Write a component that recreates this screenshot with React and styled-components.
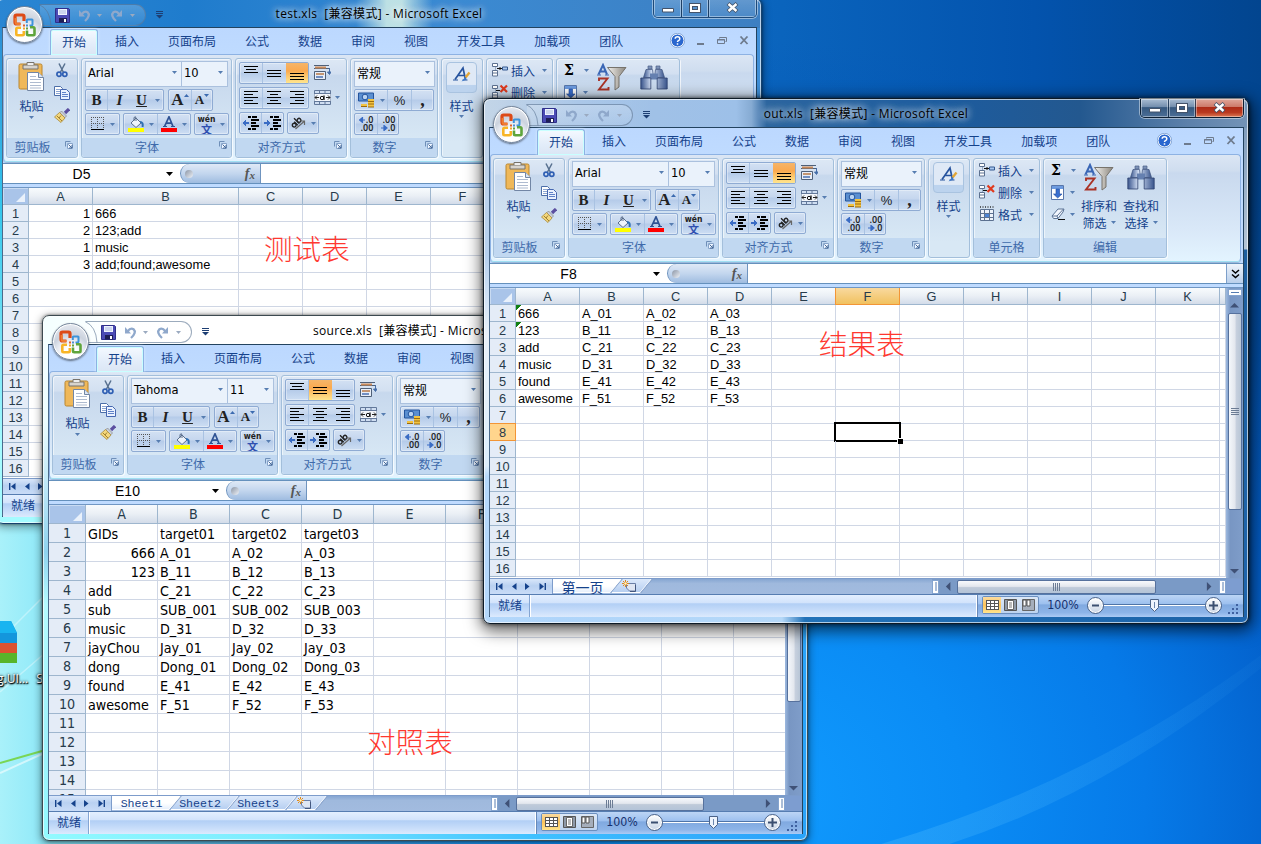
import React from 'react';
import styled, { createGlobalStyle, css } from 'styled-components';

const cjk = '"Noto Sans CJK SC", sans-serif';
const tahoma = `"DejaVu Sans Condensed", "DejaVu Sans", ${cjk}`;
const segoe = `"Open Sans", ${cjk}`;

const Global = createGlobalStyle`
  * { box-sizing: border-box; }
  body { margin: 0; font-family: ${cjk}; font-size: 12px; color: #15428b; overflow: hidden; }
  svg { display: block; flex: none; }
`;

/* ---------- desktop ---------- */
const Desktop = styled.main`
  position: relative;
  width: 1261px;
  height: 844px;
  overflow: hidden;
  background:
    linear-gradient(90deg, #a9f1fa 0, #86e6f8 60px, rgba(80, 200, 250, 0) 560px) 0 100% / 560px 430px no-repeat,
    radial-gradient(ellipse 900px 760px at 740px 800px, #119cff 0%, #0a8cf5 25%, #067ae8 45%, rgba(3, 98, 210, 0.85) 65%, rgba(2, 84, 182, 0.4) 84%, rgba(2, 80, 170, 0) 100%),
    linear-gradient(90deg, #1c8ee0 0, #0a64bd 62%, #0353ad 82%, #02458f 100%);
`;

const Beams = styled.svg`
  position: absolute;
  left: 0;
  top: 520px;
`;

const IconLabel = styled.div`
  position: absolute;
  left: -3px;
  top: 670px;
  display: flex;
  gap: 8px;
  font: 12px/18px ${segoe};
  color: #fff;
  text-shadow: 0 1px 2px #000, 0 0 3px #000, 1px 1px 1px #000;
`;

/* ---------- window frame ---------- */
const Frame = styled.section`
  position: absolute;
  left: ${p => p.$x}px;
  top: ${p => p.$y}px;
  width: 766px;
  height: 526px;
  padding: 0 5px 6px 5px;
  display: flex;
  flex-direction: column;
  border: 1px solid ${p => p.$edge || '#1b2b3a'};
  border-radius: 7px;
  background: ${p => p.$bg};
  box-shadow: inset 0 0 0 1px rgba(255, 255, 255, 0.65), ${p => p.$active
    ? '0 0 4px rgba(0,0,0,.7), 1px 4px 16px 3px rgba(0,0,0,.62)'
    : '0 0 3px rgba(0,0,0,.5), 0 2px 9px 1px rgba(0,0,0,.4)'};
`;

const TitleBar = styled.header`
  height: 28px;
  flex: none;
  display: flex;
  position: relative;
  justify-content: center;
  align-items: flex-start;
`;

const Title = styled.h1`
  margin: 5px 0 0;
  font: 400 12px/20px ${segoe};
  letter-spacing: 0.32px;
  color: #000;
  white-space: pre;
  text-shadow: 0 0 6px rgba(255,255,255,.75), 0 0 8px rgba(255,255,255,.75), 0 0 12px rgba(255,255,255,.6);
`;

const OfficeButton = styled.div`
  position: absolute;
  z-index: 3;
  left: 4px;
  top: 7px;
  width: 37px;
  height: 37px;
  border-radius: 50%;
  border: 1px solid #76869b;
  background: radial-gradient(circle at 50% 85%, #fff 0 20%, #e4e8ef 42%, #ccd3de 56%, #f1f3f8 100%);
  box-shadow: inset 0 0 0 1px #fff, 0 1px 2px rgba(0, 0, 0, 0.5);
  display: grid;
  place-items: center;
`;

const QuickAccess = styled.div`
  position: absolute;
  left: 38px;
  top: 5px;
  width: 106px;
  height: 22px;
  padding-left: 15px;
  display: flex;
  align-items: center;
  border: 1px solid rgba(90, 115, 145, 0.6);
  border-left: 0;
  border-radius: 0 11px 11px 0;
  background: linear-gradient(rgba(255,255,255,.22), rgba(255,255,255,.08));
`;

const QuickCurve = styled.svg`
  position: absolute;
  left: -1px;
  top: -1px;
`;
const Spacer = styled.span`
  width: ${p => p.$w || 0}px;
  height: ${p => p.$h || 0}px;
  flex: ${p => (p.$fill ? 1 : 'none')};
`;

const Controls = styled.div`
  position: absolute;
  right: -1px;
  top: 0;
  height: 19px;
  display: flex;
  border: 1px solid ${p => (p.$active ? '#0c1f33' : 'rgba(20,55,95,.75)')};
  border-top: 0;
  border-radius: 0 0 5px 5px;
  overflow: hidden;
  box-shadow: 0 0 0 1px rgba(255, 255, 255, 0.45);
`;

const Control = styled.span`
  width: ${p => p.$w}px;
  display: grid;
  place-items: center;
  padding-bottom: 1px;
  border-left: ${p => (p.$first ? 0 : '1px solid rgba(10,35,65,.75)')};
  box-shadow: inset 0 0 0 1px rgba(255, 255, 255, 0.4);
  background: ${p => p.$close
    ? 'linear-gradient(#e0a79a 0, #cd7a6a 42%, #ad2a16 46%, #b93a20 75%, #dd7a55 100%)'
    : p.$active
      ? 'linear-gradient(#a9bdd3 0, #7590af 42%, #35587f 48%, #4c6f97 100%)'
      : 'linear-gradient(rgba(255,255,255,.2), rgba(255,255,255,.08))'};
`;

const Client = styled.div`
  width: 755px;
  height: 490px;
  border: 1px solid #23435f;
  border-left-color: #4b6a8b;
  display: flex;
  flex-direction: column;
  background: #bfdbff;
`;

/* ---------- ribbon ---------- */
const TabStrip = styled.nav`
  height: 26px;
  flex: none;
  display: flex;
  gap: 5px;
  padding: 1px 2px 0 47px;
  background: linear-gradient(#bcd8ff, #bfdbff);
`;

const Tab = styled.span`
  padding: 0 12px;
  height: 25px;
  line-height: 24px;
  white-space: nowrap;
  border-radius: 3px 3px 0 0;
  ${p => p.$on && css`
    height: 26px;
    padding: 0 11px;
    background: linear-gradient(#f4f9ff, #e2ecf9 60%, #dbe6f4);
    border: 1px solid #8db2e3;
    border-bottom: 0;
    box-shadow: inset 0 0 0 1px #c9ffff, 0 0 3px #e0f0ff;
    position: relative;
    z-index: 1;
  `}
`;

const TabTools = styled.div`
  margin-left: auto;
  display: flex;
  align-items: center;
  gap: 11px;
  padding: 0 4px 2px 0;
`;

const RibbonBody = styled.div`
  height: 108px;
  flex: none;
  margin: 0 2px 0 0;
  padding: 3px 2px;
  display: flex;
  gap: 3px;
  border: 1px solid #8db2e3;
  border-bottom-color: #a0e0f2;
  border-radius: 4px;
  background: linear-gradient(#dbe6f4 0, #cfddef 15%, #c9d9ee 17%, #d9e8f8 70%, #e3f4ff 100%);
  box-shadow: 0 1px 0 #9cb9dc;
`;

const Group = styled.div`
  width: ${p => p.$w}px;
  height: 100px;
  flex: none;
  display: flex;
  flex-direction: column;
  border: 1px solid #a3bfdb;
  border-radius: 3px;
  box-shadow: inset 1px 1px 0 rgba(255,255,255,.55), 1px 1px 0 rgba(255,255,255,.7);
  background: linear-gradient(#dde8f5 0, #d3e0f1 15%, #c7d8ed 17%, #d8e8f5 85%);
`;

const GroupBody = styled.div`
  height: 79px;
  display: flex;
  padding: ${p => p.$pad || '3px 3px 0'};
  gap: ${p => p.$gap || 0}px;
`;

const GroupLabel = styled.div`
  flex: 1;
  background: #c1d8f1;
  color: #3e6aaa;
  line-height: 18px;
  display: flex;
  justify-content: center;
  position: relative;
  border-radius: 0 0 3px 3px;
  padding-right: ${p => (p.$launch ? 19 : 0)}px;
  svg { position: absolute; right: 4px; top: 3px; }
`;

const Stack = styled.div`
  display: flex;
  flex-direction: column;
  align-items: ${p => p.$align || 'center'};
  gap: ${p => p.$gap || 0}px;
  width: ${p => (p.$w ? p.$w + 'px' : 'auto')};
  padding-top: ${p => p.$top || 0}px;
  line-height: ${p => p.$lh || 17}px;
  white-space: nowrap;
  flex: none;
`;

const Row = styled.div`
  display: flex;
  align-items: center;
  height: ${p => p.$h || 22}px;
  gap: ${p => p.$gap || 0}px;
  flex: none;
`;

const Combo = styled.div`
  width: ${p => p.$w}px;
  height: 26px;
  margin-right: -1px;
  padding: 0 4px 3px 2px;
  display: flex;
  align-items: center;
  justify-content: space-between;
  border: 1px solid #abc1de;
  background: #eaf2fb;
  color: #000;
  font: ${p => (p.$cjk ? `12px ${cjk}` : `12.800px ${tahoma}`)};
`;

const Buttons = styled.div`
  height: 22px;
  flex: none;
  display: flex;
  border: 1px solid #8fabd3;
  border-radius: 2px;
  background: linear-gradient(#d3e1f3 0, #c5d6ee 45%, #b5cbe9 50%, #cddef3 100%);
  box-shadow: inset 0 0 0 1px rgba(255, 255, 255, 0.35);
  overflow: hidden;
`;

const Btn = styled.span`
  width: ${p => p.$w}px;
  display: flex;
  align-items: center;
  justify-content: center;
  gap: 5px;
  border-left: ${p => (p.$sep ? '1px solid #a9c2e2' : 0)};
  font: ${p => p.$font || `12px ${tahoma}`};
  text-decoration: ${p => (p.$u ? 'underline' : 'none')};
  color: #222;
  ${p => p.$hot && css`background: linear-gradient(#f5b56a 0, #fba94e 40%, #fdc267 60%, #ffe58e 100%);`}
`;

const Pinyin = styled.span`
  font: bold 8.500px/9px ${tahoma};
`;
const Hanzi = styled.span`
  font: bold 11px/10px ${cjk};
  color: #2f4fb0;
`;
const Sigma = styled.b`
  width: 13px;
  font: bold 14px "DejaVu Serif", serif;
  color: #000;
`;

const StyleTile = styled.div`
  width: 31px;
  height: 31px;
  display: grid;
  place-items: center;
  padding-bottom: 5px;
  border: 1px solid #a9c3e0;
  border-radius: 4px;
  background: linear-gradient(#dfe9f6 0, #dfe9f6 74%, #bcd3ee 76%);
`;

/* ---------- formula bar ---------- */
const FormulaBar = styled.div`
  height: 21px;
  flex: none;
  margin-top: 1px;
  display: flex;
  border: solid #6591bd;
  border-width: 1px 0;
  background: #fff;
`;

const NameBox = styled.div`
  width: 177px;
  display: flex;
  align-items: center;
  padding-right: 7px;
  font: 14px "Liberation Sans", sans-serif;
  color: #000;
  span { flex: 1; text-align: center; padding-right: 6px; }
`;

const FxZone = styled.div`
  width: 81px;
  display: flex;
  align-items: center;
  justify-content: space-between;
  padding: 0 5px 0 4px;
  border: solid #6f94bf;
  border-width: 0 1px 0 1px;
  border-radius: 10px 0 0 10px;
  background: linear-gradient(#dfe9f6, #c3d6ee 50%, #9fbce0);
  font: italic bold 14px/18px "Liberation Serif", serif;
  color: #555;
  i { width: 8px; height: 8px; border-radius: 50%; background: linear-gradient(135deg, #8b95a5, #eef2f8); }
  sub { font-size: 11px; vertical-align: -1px; line-height: 10px; }
`;

const Expand = styled.div`
  width: 17px;
  margin-left: auto;
  display: grid;
  place-items: center;
  border-left: 1px solid #7d9fca;
  background: linear-gradient(#eef4fb, #b9cfeb);
`;

/* ---------- sheet ---------- */
const Pane = styled.div`
  height: 291px;
  margin-top: 3px;
  flex: none;
  display: flex;
  border-top: 1px solid #7097c4;
`;

const Cells = styled.div`
  width: 736px;
  height: 290px;
  overflow: hidden;
  display: grid;
  align-content: start;
  grid-template-columns: ${p => p.$cols};
  grid-template-rows: ${p => p.$head}px;
  grid-auto-rows: ${p => p.$row}px;
  background: #fff;
  font: ${p => p.$font};
  color: #000;
`;

const headerBase = css`
  display: flex;
  align-items: center;
  justify-content: center;
  border: solid #9eb6ce;
  border-width: 0 1px 1px 0;
  color: #273b4b;
`;
const ColHead = styled.div`
  ${headerBase}
  background: linear-gradient(#f8fbfd 0, #eaeff5 50%, #d3dce9 100%);
  ${p => p.$on && css`
    background: linear-gradient(#f9d99f, #f1c15f);
    border-color: #f29536;
    box-shadow: -1px 0 0 #f29536;
  `}
`;
const RowHead = styled.div`
  ${headerBase}
  background: #e4ecf7;
  ${p => p.$on && css`
    background: #ffd58d;
    border-color: #f29536;
    box-shadow: 0 -1px 0 #f29536;
  `}
`;
const Corner = styled.div`
  border: solid #9eb6ce;
  border-width: 0 1px 1px 0;
  background: #a9c4e9;
  display: flex;
  align-items: flex-end;
  justify-content: flex-end;
  padding: 2px 3px;
  box-shadow: inset 1px 1px 0 #c9dbf2;
`;
const Cell = styled.div`
  position: relative;
  display: flex;
  align-items: center;
  justify-content: ${p => (p.$num ? 'flex-end' : 'flex-start')};
  padding: ${p => p.$drop}px 2px 0 2px;
  white-space: pre;
  border: solid #d0d7e5;
  border-width: 0 1px 1px 0;
  ${p => p.$flag && css`
    background: linear-gradient(135deg, #118011 0 3.6px, transparent 3.7px);
  `}
  ${p => p.$selected && css`
    &::before { content: ''; position: absolute; inset: -2px; border: 2px solid #000; }
    &::after { content: ''; position: absolute; z-index: 1; right: -4px; bottom: -4px; width: 5px; height: 5px; background: #000; box-shadow: -1px -1px 0 #fff; }
  `}
`;

const VScroll = styled.div`
  width: 17px;
  display: flex;
  flex-direction: column;
  align-items: center;
  padding: 1px 1px 4px;
  background: linear-gradient(90deg, #9db9df, #7896c3 25%, #7f9dc9);
`;
const SplitBox = styled.div`
  width: ${p => p.$w}px;
  height: ${p => p.$h}px;
  flex: none;
  display: grid;
  place-items: center;
  background: #fff;
  border: 1px solid #84a4cf;
`;
const thumbBase = css`
  border: 1px solid #56719d;
  border-radius: 2px;
  display: grid;
  place-items: center;
  flex: none;
`;
const VThumb = styled.div`
  ${thumbBase}
  width: 14px;
  height: ${p => p.$h}px;
  margin-top: 5px;
  background: linear-gradient(90deg, #f4f7fb 0, #e3e7ee 50%, #c7d0de 60%, #b8c6d6 100%);
`;
const HThumb = styled.div`
  ${thumbBase}
  width: ${p => p.$w}px;
  height: 14px;
  margin-left: 6px;
  background: linear-gradient(#f7f9fc 0, #e3e7ee 45%, #bfcad9 55%, #b4c4d8 100%);
`;

/* ---------- bottom bars ---------- */
const BottomBar = styled.div`
  height: 16px;
  flex: none;
  display: flex;
  background: linear-gradient(#86a6d2, #9fb9dd 30%, #a2bbdf);
  border-top: 1px solid #7d9ccb;
`;
const NavArrows = styled.div`
  width: 63px;
  display: flex;
  align-items: center;
  justify-content: space-around;
  padding: 0 2px;
  background: linear-gradient(#d9e7fa, #b9d1f1 45%, #c9dcf7);
  border-right: 1px solid #7d9ccb;
`;
const SheetTabs = styled.div`
  display: flex;
  overflow: hidden;
  padding-right: 13px;
`;
const SheetTab = styled.span`
  position: relative;
  z-index: 0;
  width: ${p => p.$w}px;
  height: 15px;
  margin-right: 1px;
  display: flex;
  align-items: center;
  justify-content: center;
  padding-left: ${p => p.$pl || 5}px;
  font: ${p => p.$font};
  line-height: 14px;
  color: #15428b;
  white-space: nowrap;
  &::before {
    content: '';
    position: absolute;
    z-index: -1;
    inset: 0 -7px 1px ${p => (p.$on ? '-10px' : '6px')};
    transform: skewX(-40deg);
    background: ${p => (p.$on ? 'linear-gradient(#fff 50%, #e3edfb)' : 'linear-gradient(#dce9fb, #b4cdf0)')};
    border: solid #86a0c8;
    border-width: 0 1px 0 0;
    box-shadow: inset -1px -1px 0 #fff;
  }
`;
const HScroll = styled.div`
  margin-left: auto;
  width: 294px;
  display: flex;
  align-items: center;
  background: #7a9ac6;
`;
const ScrollCorner = styled.div`width: 17px; background: #7d9dd0;`;

const StatusBar = styled.footer`
  height: 23px;
  flex: none;
  display: flex;
  border-top: 1px solid #567db1;
  background: linear-gradient(#e3efff 0, #d2e3fb 35%, #b2cff5 40%, #c9defa 75%, #dceafd 100%);
`;
const Ready = styled.div`
  width: 40px;
  padding-left: 8px;
  line-height: 20px;
  border-right: 1px solid #84a5d3;
  box-shadow: 1px 0 0 #fff;
`;
const ViewZone = styled.div`
  margin-left: auto;
  width: 266px;
  display: flex;
  align-items: center;
  padding: 0 0 2px 4px;
  border-left: 1px solid #6788b8;
  box-shadow: -1px 0 0 #fff;
  background: linear-gradient(#bcd5f5 0, #9dc0ef 40%, #80a9e0 45%, #8db4e8 80%, #abcaf5 100%);
`;
const Views = styled.div`
  display: flex;
  width: 57px;
  height: 18px;
  border: 1px solid #6b8fbf;
  border-radius: 2px;
  background: linear-gradient(#dce8f7, #bdd3ef);
`;
const View = styled.span`
  flex: 1;
  display: grid;
  place-items: center;
  background: ${p => (p.$on ? 'linear-gradient(#fbdba0, #fcc35a 50%, #ffe48c)' : 'none')};
`;
const Percent = styled.span`
  width: 48px;
  text-align: center;
  font: 12.3px ${tahoma};
  color: #15306e;
`;
const Knob = styled.span`
  width: 17px;
  height: 17px;
  flex: none;
  border: 1px solid #4b6389;
  border-radius: 50%;
  display: grid;
  place-items: center;
  background: linear-gradient(#fff, #c9d5e5);
  box-shadow: inset 0 0 0 1px #fff;
`;
const Track = styled.span`
  width: 101px;
  height: 18px;
  display: grid;
  place-items: center;
  background: linear-gradient(#4f74a8, #4f74a8) 0 8px / 100% 1px no-repeat, linear-gradient(#fff, #fff) 0 9px / 100% 1px no-repeat;
`;
const ResizeGrip = styled.div`
  align-self: flex-end;
  padding-left: 5px;
`;

const Note = styled.p`
  position: absolute;
  margin: 0;
  left: ${p => p.$x}px;
  top: ${p => p.$y}px;
  font: 300 28.6px/34px ${cjk};
  color: #ff3830;
  white-space: nowrap;
`;

/* ---------- icons ---------- */
const Svg = ({ w, h, children, ...r }) => (
  <svg width={w} height={h} viewBox={`0 0 ${w} ${h}`} fill="none" {...r}>{children}</svg>
);
const Caret = ({ c = '#567db1' }) => <Svg w={5} h={3}><path d="M0 0h5L2.5 3z" fill={c} /></Svg>;
const Tri = ({ dir, c = '#3f5176', s = 5 }) => {
  const d = { up: 'M0 6L5 1l5 5z', down: 'M0 1h10L5 6z', left: 'M6 0v10L1 5z', right: 'M1 0v10l5-5z' }[dir];
  const v = dir === 'up' || dir === 'down' ? [10, 7] : [7, 10];
  const k = s / 5;
  return <svg width={v[0] * k} height={v[1] * k} viewBox={`0 0 ${v[0]} ${v[1]}`}><path d={d} fill={c} /></svg>;
};
const Logo = () => (
  <Svg w={24} h={24}>
    <path d="M11 8V3.500Q11 2 9.500 2H3.500Q2 2 2 3.500V9.500Q2 11 3.500 11H7.500" stroke="#dd4a17" strokeWidth="3.200" />
    <path d="M2.600 5V9.500Q2.600 11 4 11H7.500" stroke="#f07c30" strokeWidth="2" />
    <path d="M13.800 10V7Q13.800 6.500 14.500 6.500H19Q19.500 6.500 19.500 7V11.500Q19.500 12.500 18.500 12.500H16.500" stroke="#3d93da" strokeWidth="2" />
    <path d="M8 14.800H4.500Q3.300 14.800 3.300 16V21Q3.300 22.200 4.500 22.200H9.500Q10.800 22.200 10.800 21V18" stroke="#f8b526" strokeWidth="2.600" />
    <path d="M14 17.500V21Q14 22.200 15.200 22.200H20.300Q21.500 22.200 21.500 21V15.500Q21.500 14.200 20.300 14.200H17" stroke="#5fa53c" strokeWidth="2.600" />
    <path d="M10 11.500h2v2h-2z" fill="#e0622a" /><path d="M13 11.500h2v2h-2z" fill="#4d8fd0" />
    <path d="M10 14.500h2v2h-2z" fill="#f0a830" /><path d="M13 14.500h2v2h-2z" fill="#64a044" />
  </Svg>
);
const Save = () => (
  <Svg w={15} h={15}>
    <path d="M.5.500h13l1 1v13H.500z" fill="#4b4bb5" stroke="#2f2f8a" />
    <path d="M3 1h9v6H3z" fill="#eef3ff" /><path d="M4 3h7M4 5h7" stroke="#aab8dd" />
    <path d="M4 10h8v4.500H4z" fill="#1e1e55" /><path d="M9 11h2v3H9z" fill="#fff" />
  </Svg>
);
const Undo = ({ flip }) => (
  <Svg w={13} h={13}>
    <g transform={flip ? 'translate(13 0) scale(-1 1)' : undefined} stroke="#8fa8cb">
      <path d="M3.500 5.500Q6.500 1.500 9.500 3.200Q13 6.500 7 12" strokeWidth="2.300" />
      <path d="M1 1v6.500h6z" fill="#8fa8cb" strokeWidth="0" />
    </g>
  </Svg>
);
const More = () => <Svg w={7} h={8}><path d="M0 0.500h7M0 2.500h7" stroke="#1d3e73" /><path d="M0 4h7L3.500 7.500z" fill="#1d3e73" /></Svg>;
const Paste = () => (
  <Svg w={27} h={31}>
    <rect x="1" y="3" width="23" height="25" rx="1.500" fill="#efb85a" stroke="#b98631" />
    <path d="M5 4h15v4H5z" fill="#d8d4cd" stroke="#77736c" /><path d="M9 4V1.500h7V4" fill="#eee" stroke="#77736c" />
    <path d="M9.500 11.500h11l5 5v13h-16z" fill="#fff" stroke="#7286a5" /><path d="M20.500 11.500v5h5" stroke="#7286a5" fill="#dbe5f2" />
    <path d="M12 15.500h6M12 18.500h11M12 21.500h11M12 24.500h11M12 27h11" stroke="#aebbd0" />
  </Svg>
);
const Cut = () => (
  <Svg w={14} h={15}><path d="M4 0.500l4.500 9M10 0.500L5.500 9" stroke="#57708f" strokeWidth="1.500" />
    <circle cx="4" cy="11.200" r="2.100" stroke="#2f5fb3" strokeWidth="1.700" /><circle cx="9.800" cy="11.200" r="2.100" stroke="#2f5fb3" strokeWidth="1.700" /></Svg>
);
const Copy = () => (
  <Svg w={16} h={14}><path d="M.5.500h6l2 2v7h-8z" fill="#fff" stroke="#4c6ea8" /><path d="M2 3.500h4M2 5.500h5M2 7.500h5" stroke="#8ba5d2" />
    <path d="M6.500 3.500h6l3 3v7h-9z" fill="#e9f1ff" stroke="#4667b0" /><path d="M8 6.500h4M8 8.500h6M8 10.500h6" stroke="#5f82c8" /></Svg>
);
const Brush = () => (
  <Svg w={16} h={15}><path d="M15 1l-4 4" stroke="#5b4fa0" strokeWidth="3.200" /><path d="M7.500 3l5 5-2 2-5-5z" fill="#c9ced8" stroke="#777" strokeWidth=".6" />
    <path d="M5.500 4.500l5.500 5.500-4 4.500L.5 9z" fill="#f3d77c" stroke="#a8893a" strokeWidth=".8" /><path d="M3 8l5 5M5 10l2-2.500" stroke="#a08030" /></Svg>
);
const Lines = ({ rows, y0 = 0, w = 15, h = 14, gap = 3 }) => (
  <Svg w={w} h={h} shapeRendering="crispEdges">
    {rows.map(([a, b], i) => <path key={i} d={`M${a} ${y0 + i * gap + 0.5}H${b}`} stroke="#000" />)}
  </Svg>
);
const Borders = () => (
  <Svg w={14} h={14} shapeRendering="crispEdges"><path d="M0 .5h13M0 6.500h13M.5 0v12M6.500 0v12M12.500 0v12" stroke="#555" strokeDasharray="1 1" /><path d="M0 12.500h13" stroke="#000" /></Svg>
);
const Bucket = () => (
  <Svg w={16} h={16}><path d="M3 7l5-5 5 5-5 4.500z" fill="#eef4fb" stroke="#5b6f8c" /><path d="M6 5V1.500q2-2 2 1V5" stroke="#5b6f8c" />
    <path d="M12 6q3.500 0 2.500 5" stroke="#2f6fb3" strokeWidth="2" /><path d="M0 12h16v4H0z" fill="#ff0" /></Svg>
);
const FontColor = () => (
  <Svg w={16} h={16}><path d="M3.500 10.500L8 0.800l4 9.700M5 7.200h6" stroke="#2f5394" strokeWidth="1.700" /><path d="M2 10.500h4M10 10.500h4" stroke="#2f5394" /><path d="M0 12h16v4H0z" fill="red" /></Svg>
);
const Indent = ({ right }) => (
  <Svg w={17} h={15} shapeRendering="crispEdges"><path d="M6 1h3M10 1h5M9 4h8M9 7h5M9 10h8M6 13h3M10 13h4" stroke="#000" strokeWidth="2" />
    <path d={right ? 'M0 5.500h3V3l4 4-4 4V8.500H0z' : 'M8 5.500H5V3L1 7l4 4V8.500h3z'} fill="#3a6cc4" transform="translate(0 .8) scale(.88)" /></Svg>
);
const Orient = () => (
  <Svg w={16} h={14}><g transform="rotate(-45 6 6)" stroke="#222" strokeWidth="1.400"><circle cx="2.500" cy="7" r="1.900" /><path d="M5 4.500v5M7.200 2v7.500" /><circle cx="9.300" cy="7" r="1.900" /></g><path d="M5.500 13L14 5.500M10.500 5H14.500V9" stroke="#666" strokeWidth="1.200" /></Svg>
);
const Wrap = () => (
  <Svg w={17} h={17}><path d="M0 1.500h15M0 4.500h15" stroke="#4f6078" /><path d="M1 2.500h11v2H1z" fill="#c98a5a" /><path d="M15.500 4v6M13.500 8l2 2.500 1.500-2.500z" stroke="#466ea8" fill="#466ea8" />
    <path d="M.500 7.500h11v8H.500z" fill="#e8eef8" stroke="#4f6078" /><path d="M2 10h8" stroke="#b87846" strokeWidth="1.500" /><path d="M2 13h7" stroke="#4a6fb0" strokeWidth="1.500" /></Svg>
);
const Merge = () => (
  <Svg w={17} h={15}><path d="M.5.500h16v14H.500zM5.500 0v3M11 0v3M5.500 12v3M11 12v3" stroke="#62789a" fill="#cfdef2" /><path d="M0 3.500h17v8H0z" fill="#f3f6fb" stroke="#62789a" />
    <path d="M1 7.500h4M12 7.500h4M3 5.500l-2 2 2 2M14 5.500l2 2-2 2" stroke="#222" /><circle cx="8" cy="8" r="1.700" stroke="#111" /><path d="M10 5.500v4.500" stroke="#111" strokeWidth="1.300" /></Svg>
);
const Money = () => (
  <Svg w={17} h={16}><path d="M.5 1h15v8h-15z" fill="#5b8fd0" stroke="#24549c" /><circle cx="7" cy="5" r="2.800" fill="#b9d3f2" stroke="#24549c" />
    <path d="M10 7h6v8h-6z" fill="#f3c33f" /><path d="M10 9.500h6M10 12h6M10 15h6M3 14.500h6" stroke="#9a6a10" /><path d="M3 13h6" stroke="#f3c33f" strokeWidth="2" /></Svg>
);
const Decimals = styled.span`
  display: flex;
  flex-direction: column;
  align-items: flex-end;
  font: 9px/8px "DejaVu Sans Condensed", sans-serif;
  color: #111;
  -webkit-text-stroke: 0.2px #111;
  span { display: flex; align-items: center; }
`;
const BlueArrow = ({ right }) => <Svg w={7} h={6}><path d={right ? 'M0 3h3M3 .5v5L6 3z' : 'M6 3H3M3.500 .5v5L.5 3z'} stroke="#3a6cc4" fill="#3a6cc4" strokeWidth="1.200" /></Svg>;
const Launch = () => <Svg w={8} h={8}><path d="M.5 5.500v-5h5" stroke="#6f8fb8" /><path d="M2.500 2.500h5v5h-5z" fill="#eef5ff" stroke="#86a3c9" /><path d="M3.500 3.500L7 7M7 4v3H4" stroke="#466a9a" /></Svg>;
const Grow = ({ down }) => <Svg w={5} h={14}><path d={down ? 'M0 1h5L2.500 4z' : 'M0 4h5L2.500 1z'} fill="#3c6bb0" /></Svg>;
const StyleA = () => (
  <Svg w={18} h={18}><path d="M2 13.500L10 2l2.500 11.500M4.500 9.500h7" stroke="#27549e" strokeWidth="1.700" /><path d="M0 14h5M9.500 14h5" stroke="#27549e" />
    <path d="M16.500 6.500l-4 5" stroke="#e2a638" strokeWidth="2.400" /><path d="M12.500 11l-4 4.500 5-2z" fill="#3a78cc" /></Svg>
);
const CellOp = ({ kind }) => (
  <Svg w={16} h={16}>
    {kind === 'fmt' ? <><path d="M1.500 3.500h13v11h-13zM1.500 7.500h13M1.500 11.500h13M5.500 3v12M10.500 3v12" stroke="#5c7190" fill="#eef3fa" /><path d="M6 8h4v3H6z" fill="#4d84d4" /><path d="M1 1h14" stroke="#333" strokeDasharray="1 1.500" strokeWidth="1.500" /></>
      : <><path d="M.5 1.500h5v3h-5zM.5 8.500h5v5.500h-5zM.5 11h5" stroke="#5c7190" fill="#fff" /><path d="M3.500 4.500v4" stroke="#5c7190" strokeDasharray="1 1" />
        {kind === 'ins' ? <><path d="M5 6.500h5M8 5v3" stroke="#111" /><path d="M10.500 5h5v3h-5z" fill="#a8c8f0" stroke="#34598f" /></>
          : <><path d="M4 6.500h4" stroke="#111" /><path d="M8.500 1.500l6.500 6.500M15 1.500L8.500 8" stroke="#e03a1e" strokeWidth="2.200" /></>}</>}
  </Svg>
);
const FillDown = () => <Svg w={14} h={15}><path d="M.5.500h12v14H.500z" fill="#fff" stroke="#5877ab" /><path d="M1 1h11v3H1z" fill="#6d9be0" /><path d="M5 4h3.500v5H11L6.700 13 2.500 9H5z" fill="#3a6fd0" stroke="#1f4c9c" strokeWidth=".6" /></Svg>;
const Eraser = () => <Svg w={15} h={12}><path d="M1 8l6-7h6l-1 3-5 6.500H2.500z" fill="#f2f6fd" stroke="#5d7596" /><path d="M1 8h5l6.500-7M6 8l1 2.500" stroke="#5d7596" /><path d="M7 11.500h7" stroke="#111" /></Svg>;
const Sort = () => (
  <Svg w={30} h={29}><path d="M1.500 11.500L6 2l4 9.500M3.200 8.500h6" stroke="#3a66b5" strokeWidth="2" /><path d="M0 12h4M8 12h4" stroke="#3a66b5" />
    <path d="M2 18v-2.500h8.500L2 26.500h9.500V24" stroke="#a93226" strokeWidth="1.900" />
    <path d="M10.500 4.500h18.500L22 13.500V24l-4 3V13.500z" fill="url(#fun)" stroke="#77736c" />
    <defs><linearGradient id="fun"><stop stopColor="#f2f0ec" /><stop offset="1" stopColor="#8b867e" /></linearGradient></defs></Svg>
);
const Find = () => (
  <Svg w={28} h={27}><defs><linearGradient id="bin"><stop stopColor="#39558d" /><stop offset=".4" stopColor="#d6e2f6" /><stop offset="1" stopColor="#39558d" /></linearGradient></defs>
    <path d="M8 2h4v3H8zM16 2h4v3h-4z" fill="#7d93b8" stroke="#4a5f88" strokeWidth=".7" />
    <path d="M6 5.500h6.500l1 8H3.500zM15.500 5.500H22l2.500 8h-10z" fill="url(#bin)" stroke="#3d527c" strokeWidth=".7" />
    <path d="M10 9.500h8v6h-8z" fill="#6580b0" /><path d="M.8 14h10v11H.8zM17.200 14h10v11h-10z" fill="url(#bin)" stroke="#2f4370" strokeWidth=".8" /></Svg>
);
const Help = () => <Svg w={15} h={15}><circle cx="7.500" cy="7.500" r="6.500" fill="#2a67cf" stroke="#fff" /><circle cx="7.500" cy="7.500" r="7.200" stroke="#5f86bd" strokeWidth=".6" /><path d="M5.200 5.800q0-2 2.300-2T9.800 5.800q0 1.200-1.300 1.800-1 .5-1 1.400M7.500 10.200v1.500" stroke="#fff" strokeWidth="1.500" /></Svg>;
const NewSheet = () => <Svg w={16} h={13}><path d="M4.500 3.500h9v7.500h-6l-3-3z" fill="#dfe6f3" stroke="#6b7fa6" /><path d="M8 11.500h5.500V5" stroke="#44587f" /><path d="M3.500 0v7M0 3.500h7M1 1l5 5M6 1L1 6" stroke="#e08a1e" /><circle cx="3.500" cy="3.500" r="1.200" fill="#fff6c0" /></Svg>;
const Grip = ({ v }) => <Svg w={8} h={8} shapeRendering="crispEdges">{[0, 2, 4, 6].map(i => <path key={i} d={v ? `M0 ${i + 0.5}h8` : `M${i + 0.5} 0v8`} stroke="#6c7c94" />)}</Svg>;

/* ---------- ribbon groups ---------- */
function Ribbon({ font, size, valign }) {
  const serif = s => `bold ${s}px "Liberation Serif", serif`;
  return (
    <RibbonBody>
      <Group $w={72}>
        <GroupBody $pad="2px 5px 0 11px">
          <Stack $w={27}><Paste /><Stack $top={5} $gap={2}>粘贴<Caret /></Stack></Stack>
          <Stack $w={34} $top={2} $gap={8}><Cut /><Copy /><Brush /></Stack>
        </GroupBody>
        <GroupLabel $launch>剪贴板<Launch /></GroupLabel>
      </Group>

      <Group $w={151}>
        <GroupBody $pad="2px 3px 0"><Stack $align="stretch" $gap={2}>
          <Row $h={26}><Combo $w={97}>{font}<Caret /></Combo><Combo $w={47}>{size}<Caret /></Combo></Row>
          <Row $gap={4}>
            <Buttons><Btn $w={21} $font={serif(15)}>B</Btn><Btn $w={24} $sep $font={`italic ${serif(15)}`}>I</Btn><Btn $w={21} $u $font={serif(15)}>U</Btn><Btn $w={11}><Caret /></Btn></Buttons>
            <Buttons><Btn $w={22} $font={serif(17)}><Row $gap={0}>A<Grow /></Row></Btn><Btn $w={21} $sep $font={serif(13)}><Row $gap={0}>A<Grow down /></Row></Btn></Buttons>
          </Row>
          <Row $gap={3}>
            <Buttons><Btn $w={33}><Borders /><Caret /></Btn></Buttons>
            <Buttons><Btn $w={33}><Bucket /><Caret /></Btn><Btn $w={33} $sep><FontColor /><Caret /></Btn></Buttons>
            <Buttons><Btn $w={33}><Stack $lh={10}><Pinyin>wén</Pinyin><Hanzi>文</Hanzi></Stack><Caret /></Btn></Buttons>
          </Row>
        </Stack></GroupBody>
        <GroupLabel $launch>字体<Launch /></GroupLabel>
      </Group>

      <Group $w={112}>
        <GroupBody $pad="3px 3px 0" $gap={5}>
          <Stack $align="flex-start" $gap={3} $w={70}>
            <Buttons>
              <Btn $w={22}><Lines rows={[[0, 14], [2, 12], [0, 14]]} y0={0} /></Btn>
              <Btn $w={24} $sep $hot={valign === 1}><Lines rows={[[0, 14], [0, 14], [0, 14]]} y0={4} /></Btn>
              <Btn $w={22} $hot={valign === 2}><Lines rows={[[0, 14], [0, 14], [0, 14]]} y0={7} /></Btn>
            </Buttons>
            <Buttons>
              <Btn $w={22}><Lines rows={[[0, 14], [0, 9], [0, 14], [0, 9], [0, 14]]} /></Btn>
              <Btn $w={24} $sep><Lines rows={[[0, 14], [3, 11], [0, 14], [3, 11], [0, 14]]} /></Btn>
              <Btn $w={22}><Lines rows={[[0, 14], [5, 14], [0, 14], [5, 14], [0, 14]]} /></Btn>
            </Buttons>
            <Row $gap={3}>
              <Buttons><Btn $w={21}><Indent /></Btn><Btn $w={22} $sep><Indent right /></Btn></Buttons>
              <Buttons><Btn $w={30}><Orient /><Caret /></Btn></Buttons>
            </Row>
          </Stack>
          <Stack $align="flex-start" $gap={9} $top={2}><Wrap /><Row $gap={4} $h={15}><Merge /><Caret /></Row></Stack>
        </GroupBody>
        <GroupLabel $launch>对齐方式<Launch /></GroupLabel>
      </Group>

      <Group $w={88}>
        <GroupBody $pad="2px 3px 0"><Stack $align="flex-start" $gap={2}>
          <Combo $w={81} $cjk>常规<Caret /></Combo>
          <Buttons><Btn $w={32}><Money /><Caret /></Btn><Btn $w={24} $sep $font={'13px "Liberation Sans", sans-serif'}>%</Btn><Btn $w={22} $sep $font={serif(18)}><Row $h={26}>,</Row></Btn></Buttons>
          <Buttons>
            <Btn $w={22}><Decimals><span><BlueArrow />.0</span><span>.00</span></Decimals></Btn>
            <Btn $w={21} $sep><Decimals><span>.00</span><span><BlueArrow right />.0</span></Decimals></Btn>
          </Buttons>
        </Stack></GroupBody>
        <GroupLabel $launch>数字<Launch /></GroupLabel>
      </Group>

      <Group $w={42}>
        <GroupBody $pad="3px 4px 0"><Stack><StyleTile><StyleA /></StyleTile><Stack $top={4} $gap={1}>样式<Caret /></Stack></Stack></GroupBody>
      </Group>

      <Group $w={67}>
        <GroupBody $pad="0 5px"><Stack $align="flex-start">
          {[['ins', '插入'], ['del', '删除'], ['fmt', '格式']].map(([k, t]) => (
            <Row key={k} $gap={3}><CellOp kind={k} />{t}<Spacer $w={1} /><Caret /></Row>
          ))}
        </Stack></GroupBody>
        <GroupLabel>单元格</GroupLabel>
      </Group>

      <Group $w={124}>
        <GroupBody $pad="0 5px 0 7px">
          <Stack $align="flex-start" $w={27}>
            <Row $gap={7}><Sigma>Σ</Sigma><Caret /></Row>
            <Row $gap={5}><FillDown /><Caret /></Row>
            <Row $gap={4}><Eraser /><Caret /></Row>
          </Stack>
          <Stack $w={42} $top={4}><Sort /><Stack $top={5}><span>排序和</span><Row $h={17} $gap={4}>筛选<Caret /></Row></Stack></Stack>
          <Stack $w={42} $top={5}><Find /><Stack $top={6}><span>查找和</span><Row $h={17} $gap={4}>选择<Caret /></Row></Stack></Stack>
        </GroupBody>
        <GroupLabel>编辑</GroupLabel>
      </Group>
    </RibbonBody>
  );
}

const TABS = ['开始', '插入', '页面布局', '公式', '数据', '审阅', '视图', '开发工具', '加载项', '团队'];

function ExcelWindow({ file, x, y, bg, edge, active, font, size, valign, cell, grid, sheets, vThumb, hThumb, children }) {
  const letters = 'ABCDEFGHIJKLM'.split('').slice(0, grid.widths.length);
  const rows = Array.from({ length: grid.rows }, (_, i) => i);
  return (
    <Frame $x={x} $y={y} $bg={bg} $edge={edge} $active={active}>
      <TitleBar>
        <OfficeButton><Logo /></OfficeButton>
        <QuickAccess>
          <QuickCurve width="14" height="22" viewBox="0 0 14 22"><path d="M0 .5Q11 5 12 21.500" stroke="rgba(90,115,145,.6)" fill="none" /></QuickCurve>
          <Save /><Spacer $w={8} /><Undo /><Spacer $w={6} /><Caret c="#9aaac0" /><Spacer $w={8} /><Undo flip /><Spacer $w={7} /><Caret c="#9aaac0" />
          <Spacer $w={21} /><More />
        </QuickAccess>
        <Title>{file}{'  '}[兼容模式]{' '}-{' '}Microsoft Excel</Title>
        <Controls $active={active}>
          <Control $w={27} $first $active={active}><Svg w={12} h={10}><path d="M.5 5.500h11v3.500H.500z" fill="#fff" stroke="#43536a" /></Svg></Control>
          <Control $w={27} $active={active}><Svg w={12} h={10}><path d="M2 2h8v6H2z" stroke="#43536a" strokeWidth="4" /><path d="M2 2h8v6H2z" stroke="#fff" strokeWidth="2" /></Svg></Control>
          <Control $w={48} $close={active}><Svg w={13} h={11}><path d="M2 1.500l9 8M11 1.500l-9 8" stroke="#43536a" strokeWidth="4" /><path d="M2.500 2l8 7M10.500 2l-8 7" stroke="#fff" strokeWidth="2.400" /></Svg></Control>
        </Controls>
      </TitleBar>
      <Client>
        <TabStrip>
          {TABS.map((t, i) => <Tab key={t} $on={i === 0}>{t}</Tab>)}
          <TabTools>
            <Help />
            <Svg w={9} h={8}><path d="M1 7h7" stroke="#6e7b8d" strokeWidth="2" /></Svg>
            <Svg w={12} h={9}><path d="M3.500 2.500v-1h7v4h-1" stroke="#6e7b8d" /><path d="M1.500 3.500h7v4h-7z" stroke="#6e7b8d" /><path d="M1 4h8" stroke="#6e7b8d" /></Svg>
            <Svg w={11} h={9}><path d="M1.500.500l7 7.500M8.500.500L1.500 8" stroke="#6e7b8d" strokeWidth="1.800" /></Svg>
          </TabTools>
        </TabStrip>
        <Ribbon font={font} size={size} valign={valign} />
        <FormulaBar>
          <NameBox><span>{cell}</span><svg width="7" height="4" viewBox="0 0 7 4"><path d="M0 0h7L3.500 4z" fill="#000" /></svg></NameBox>
          <FxZone><i /><span>f<sub>x</sub></span></FxZone>
          <Expand><Svg w={9} h={10}><path d="M1 1l3.500 3L8 1M1 5.500l3.500 3L8 5.500" stroke="#000" strokeWidth="1.500" /></Svg></Expand>
        </FormulaBar>
        <Pane>
          <Cells $cols={[grid.rowHead, ...grid.widths].map(v => v + 'px').join(' ')} $head={grid.head} $row={grid.row} $font={grid.font}>
            <Corner><Svg w={9} h={9}><path d="M9 0v9H0z" fill="#e9f1fb" /></Svg></Corner>
            {letters.map((l, c) => <ColHead key={l} $on={grid.selected && grid.selected[0] === l}>{grid.widths[c] > 20 ? l : null}</ColHead>)}
            {rows.map(r => (
              <React.Fragment key={r}>
                <RowHead $on={grid.selected && grid.selected[1] === r + 1}>{r + 1}</RowHead>
                {letters.map((l, c) => {
                  const v = grid.data[r]?.[c];
                  return (
                    <Cell key={l} $num={typeof v === 'number'} $drop={grid.drop || 0} $flag={grid.flags && c === 0 && r < 2}
                      $selected={grid.selected && grid.selected[0] === l && grid.selected[1] === r + 1}>{v}</Cell>
                  );
                })}
              </React.Fragment>
            ))}
          </Cells>
          <VScroll>
            <SplitBox $w={14} $h={7}><Svg w={8} h={1}><path d="M0 .5h8" stroke="#567db1" /></Svg></SplitBox>
            <Spacer $h={6} />
            <Tri dir="up" s={4.5} />
            <VThumb $h={vThumb}><Grip v /></VThumb>
            <Spacer $fill />
            <Tri dir="down" s={4.5} />
          </VScroll>
        </Pane>
        <BottomBar>
          <NavArrows>
            <Svg w={7} h={7}><path d="M.7 0v7" stroke="#15428b" strokeWidth="1.400" /><path d="M6.500 0v7L2 3.500z" fill="#15428b" /></Svg>
            <Svg w={5} h={7}><path d="M4.500 0v7L0 3.500z" fill="#15428b" /></Svg>
            <Svg w={5} h={7}><path d="M0 0v7l4.500-3.500z" fill="#15428b" /></Svg>
            <Svg w={7} h={7}><path d="M6.300 0v7" stroke="#15428b" strokeWidth="1.400" /><path d="M.5 0v7L5 3.500z" fill="#15428b" /></Svg>
          </NavArrows>
          <SheetTabs>
            {sheets.names.map((s, i) => <SheetTab key={s} $w={57} $on={i === 0} $font={sheets.font} $pl={i ? 3 : 2}>{s}</SheetTab>)}
            <SheetTab $w={29} $pl={8}><NewSheet /></SheetTab>
          </SheetTabs>
          <HScroll>
            <SplitBox $w={7} $h={14}><Svg w={2} h={9}><path d="M1 0v9" stroke="#567db1" /></Svg></SplitBox>
            <Spacer $w={6} /><Tri dir="left" s={4.5} />
            <HThumb $w={hThumb}><Grip /></HThumb>
            <Spacer $fill />
            <Tri dir="right" s={4.5} /><Spacer $w={7} />
            <SplitBox $w={7} $h={14}><Svg w={2} h={9}><path d="M1 0v9" stroke="#567db1" /></Svg></SplitBox>
          </HScroll>
          <ScrollCorner />
        </BottomBar>
        <StatusBar>
          <Ready>就绪</Ready>
          <ViewZone>
            <Views>
              <View $on><Svg w={13} h={10} shapeRendering="crispEdges"><path d="M.5.500h12v9H.500zM.5 3.500h12M.5 6.500h12M4.500.500v9M8.500.500v9" stroke="#555" fill="#fff" /></Svg></View>
              <View><Svg w={13} h={12}><path d="M.5.500h12v11H.500z" fill="#8e99a8" stroke="#555" /><path d="M3.500 1.500h6v9h-6z" fill="#fff" stroke="#666" /><path d="M5 4h3M5 6h3M5 8h3" stroke="#777" /></Svg></View>
              <View><Svg w={13} h={12}><path d="M.5.500h12v11H.500z" fill="#a5aebb" stroke="#666" /><path d="M1 1h3v6H1zM5 1h3v6H5z" fill="#fff" stroke="#555" /></Svg></View>
            </Views>
            <Percent>100%</Percent>
            <Knob><Svg w={9} h={9}><path d="M1 4.500h7" stroke="#3b4f70" strokeWidth="2" /></Svg></Knob>
            <Track><Svg w={9} h={13}><path d="M.5.500h8v8l-4 4-4-4z" fill="#eef4fd" stroke="#4b6389" /><path d="M4.500 3v6" stroke="#6b86ae" /></Svg></Track>
            <Knob><Svg w={9} h={9}><path d="M0 4.500h9M4.500 0v9" stroke="#3b4f70" strokeWidth="2" /></Svg></Knob>
            <ResizeGrip><Svg w={12} h={12}>{[[9, 1], [9, 5], [5, 5], [9, 9], [5, 9], [1, 9]].map(([a, b]) => <rect key={`${a}-${b}`} x={a} y={b} width="2" height="2" fill="#3f61a0" />)}</Svg></ResizeGrip>
          </ViewZone>
        </StatusBar>
      </Client>
      {children}
    </Frame>
  );
}

const arial = '12.8px "Liberation Sans", Arial, sans-serif';
const song = `11.6px "Liberation Mono", ${cjk}`;

export default function App() {
  return (
    <>
      <Global />
      <Desktop>
        <Beams width="1261" height="324" viewBox="0 520 1261 324" fill="none">
          <defs>
            <linearGradient id="sweep" x1="0" y1="0" x2="1" y2="0">
              <stop stopColor="#5cc4ff" stopOpacity=".3" /><stop offset="1" stopColor="#5cc4ff" stopOpacity=".04" />
            </linearGradient>
          </defs>
          <path d="M860 850Q1080 790 1261 655L1261 668Q1100 800 930 850z" fill="url(#sweep)" />
          <path d="M0 640L60 580M0 692L60 640" stroke="rgba(255,255,255,.35)" strokeWidth="1.500" />
          <path d="M0 763L42 751" stroke="#79d655" strokeWidth="2" /><path d="M0 773L42 754" stroke="rgba(255,255,255,.55)" strokeWidth="2" />
          <path d="M0 621h11l6 12v10H0z" fill="#1496dc" /><path d="M0 621h11l6 12H0z" fill="#19b4f0" />
          <path d="M0 643h17v10H0z" fill="#dc5230" /><path d="M0 653h17v10H0z" fill="#58b52a" />
        </Beams>
        <IconLabel><span>g.UI...</span><span>S</span></IconLabel>

        <ExcelWindow
          file="test.xls" x={-4} y={-2} edge="#16426e"
          bg="linear-gradient(90deg, transparent 47%, rgba(235,255,235,.75) 51%, rgba(235,255,235,.75) 53%, transparent 57%) 0 0 / 100% 28px no-repeat, linear-gradient(90deg, #2a86d3 0, #1f7ccd 25%, #3b8ad2 60%, #3d7fc2 100%) 0 0 / 100% 29px no-repeat, linear-gradient(#3f8fd8, #3f8fd8) 100% 0 / 8px 100% no-repeat, linear-gradient(#2a86d3 0, #35c6ec 40%, #a5fbff 85%)"
          font="Arial" size="10" valign={2} cell="D5" vThumb={197} hThumb={199}
          sheets={{ names: ['Sheet1'], font: song }}
          grid={{
            rowHead: 26, head: 17, row: 17, rows: 16, font: arial, widths: [64, 146, 64, 64, 64, 64, 64, 64, 64, 64],
            data: [[1, '666'], [2, '123;add'], [1, 'music'], [3, 'add;found;awesome']],
          }}
        >
          <Note $x={267} $y={232}>测试表</Note>
        </ExcelWindow>

        <ExcelWindow
          file="source.xls" x={42} y={315} edge="#3c4a50"
          bg="linear-gradient(90deg, #f4ffff 0, #fff 12%, #fff 100%) 0 0 / 100% 29px no-repeat, linear-gradient(#2aa4fa, #2aa4fa) 100% 0 / 8px 100% no-repeat, linear-gradient(90deg, #92faff 0, #7cecff 30%, #3fc0ff 65%, #2aa0fa 100%) 0 100% / 100% 7px no-repeat, linear-gradient(#f6ffff 0, #ecfdff 20%, #8fd2ee 45%, #b5fbff 55%, #a0f2fb 80%, #92faff 100%)"
          font="Tahoma" size="11" valign={1} cell="E10" vThumb={172} hThumb={188}
          sheets={{ names: ['Sheet1', 'Sheet2', 'Sheet3'], font: song }}
          grid={{
            rowHead: 37, head: 19, row: 19, rows: 15, drop: 1, font: `14.2px ${tahoma}`, widths: Array(10).fill(72),
            data: [
              ['GIDs', 'target01', 'target02', 'target03'],
              [666, 'A_01', 'A_02', 'A_03'],
              [123, 'B_11', 'B_12', 'B_13'],
              ['add', 'C_21', 'C_22', 'C_23'],
              ['sub', 'SUB_001', 'SUB_002', 'SUB_003'],
              ['music', 'D_31', 'D_32', 'D_33'],
              ['jayChou', 'Jay_01', 'Jay_02', 'Jay_03'],
              ['dong', 'Dong_01', 'Dong_02', 'Dong_03'],
              ['found', 'E_41', 'E_42', 'E_43'],
              ['awesome', 'F_51', 'F_52', 'F_53'],
            ],
          }}
        >
          <Note $x={324} $y={408}>对照表</Note>
        </ExcelWindow>

        <ExcelWindow
          active file="out.xls" x={483} y={98} edge="#0d1a26"
          bg="linear-gradient(100deg, rgba(255,255,255,.2), transparent 20%), linear-gradient(90deg, #b5cbe2 0, #a3c2e6 12%, #9dc0e8 33%, #86abd3 35%, #2c659f 37%, #1d5c9f 60%, #23588f 78%, #5c80aa 92%, #7393b7 100%) 0 0 / 100% 29px no-repeat, linear-gradient(#7393b7 0, #b6c6d6 150px, #1d5f9f 151px, #1f66ae 100%) 100% 0 / 8px 100% no-repeat, linear-gradient(90deg, #add4fb 0, #b5d8f8 39%, #2272b8 42%, #1c62a8 100%) 0 100% / 100% 7px no-repeat, linear-gradient(#b5cbe2 0, #a9c8ec 30%, #e6eff8 45%, #d9ecfb 70%, #add4fb 72%)"
          font="Arial" size="10" valign={2} cell="F8" vThumb={197} hThumb={199}
          sheets={{ names: ['第一页'], font: `14px ${cjk}` }}
          grid={{
            rowHead: 26, head: 17, row: 17, rows: 16, font: arial, widths: [...Array(11).fill(64), 6], selected: ['F', 8], flags: true,
            data: [
              ['666', 'A_01', 'A_02', 'A_03'],
              ['123', 'B_11', 'B_12', 'B_13'],
              ['add', 'C_21', 'C_22', 'C_23'],
              ['music', 'D_31', 'D_32', 'D_33'],
              ['found', 'E_41', 'E_42', 'E_43'],
              ['awesome', 'F_51', 'F_52', 'F_53'],
            ],
          }}
        >
          <Note $x={335} $y={227}>结果表</Note>
        </ExcelWindow>
      </Desktop>
    </>
  );
}
